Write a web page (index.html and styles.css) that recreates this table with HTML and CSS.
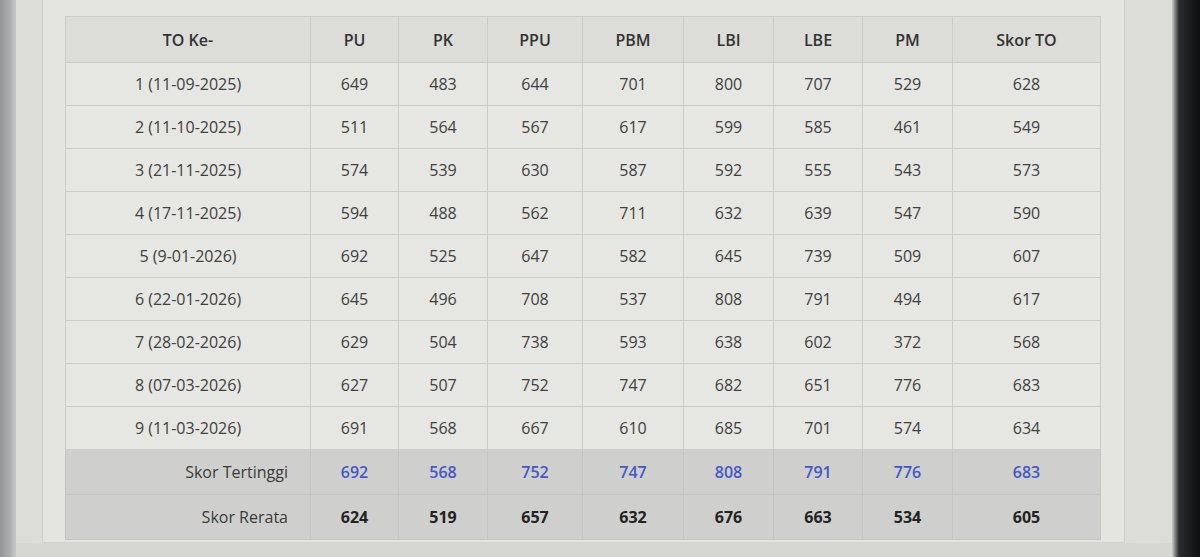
FILE: index.html
```html
<!DOCTYPE html>
<html lang="id">
<head>
<meta charset="utf-8">
<title>Skor TO</title>
<link rel="stylesheet" href="styles.css">
</head>
<body>
<div class="edge-left"></div>
<div class="screen">
  <div class="card">
    <table class="scores">
      <colgroup>
        <col class="c-label"><col class="c88"><col class="c89"><col class="c95"><col class="c101"><col class="c90"><col class="c89"><col class="c90"><col class="c-total">
      </colgroup>
      <thead>
        <tr><th>TO Ke-</th><th>PU</th><th>PK</th><th>PPU</th><th>PBM</th><th>LBI</th><th>LBE</th><th>PM</th><th>Skor TO</th></tr>
      </thead>
      <tbody>
        <tr><td>1 (11-09-2025)</td><td>649</td><td>483</td><td>644</td><td>701</td><td>800</td><td>707</td><td>529</td><td>628</td></tr>
        <tr><td>2 (11-10-2025)</td><td>511</td><td>564</td><td>567</td><td>617</td><td>599</td><td>585</td><td>461</td><td>549</td></tr>
        <tr><td>3 (21-11-2025)</td><td>574</td><td>539</td><td>630</td><td>587</td><td>592</td><td>555</td><td>543</td><td>573</td></tr>
        <tr><td>4 (17-11-2025)</td><td>594</td><td>488</td><td>562</td><td>711</td><td>632</td><td>639</td><td>547</td><td>590</td></tr>
        <tr><td>5 (9-01-2026)</td><td>692</td><td>525</td><td>647</td><td>582</td><td>645</td><td>739</td><td>509</td><td>607</td></tr>
        <tr><td>6 (22-01-2026)</td><td>645</td><td>496</td><td>708</td><td>537</td><td>808</td><td>791</td><td>494</td><td>617</td></tr>
        <tr><td>7 (28-02-2026)</td><td>629</td><td>504</td><td>738</td><td>593</td><td>638</td><td>602</td><td>372</td><td>568</td></tr>
        <tr><td>8 (07-03-2026)</td><td>627</td><td>507</td><td>752</td><td>747</td><td>682</td><td>651</td><td>776</td><td>683</td></tr>
        <tr><td>9 (11-03-2026)</td><td>691</td><td>568</td><td>667</td><td>610</td><td>685</td><td>701</td><td>574</td><td>634</td></tr>
      </tbody>
      <tfoot>
        <tr class="max"><td class="sum-label">Skor Tertinggi</td><td>692</td><td>568</td><td>752</td><td>747</td><td>808</td><td>791</td><td>776</td><td>683</td></tr>
        <tr class="avg"><td class="sum-label">Skor Rerata</td><td>624</td><td>519</td><td>657</td><td>632</td><td>676</td><td>663</td><td>534</td><td>605</td></tr>
      </tfoot>
    </table>
  </div>
  <div class="screen-bottom"></div>
</div>
<div class="edge-right"></div>
</body>
</html>
```

FILE: styles.css
```css
html, body {
  margin: 0;
  padding: 0;
}
body {
  display: flex;
  width: 1200px;
  height: 557px;
  overflow: hidden;
  background: #111214;
  font-family: "Open Sans", "Noto Sans", sans-serif;
}
.edge-left {
  width: 16px;
  background: linear-gradient(90deg, #939496 0%, #acadae 60%, #c6c7c6 100%);
}
.screen {
  width: 1156px;
  display: flex;
  flex-direction: column;
  background: linear-gradient(90deg, #dcdcd9 0%, #e3e3df 30%, #e2e2de 80%, #dcdcd8 100%);
}
.card {
  margin-left: 26px;
  width: 1083px;
  height: 543px;
  box-sizing: border-box;
  border-left: 1px solid #cdcdca;
  border-right: 1px solid #cdcdca;
  border-bottom: 1px solid #d2d2cf;
  padding: 16px 0 0 22px;
  background: #e4e4e0;
}
.screen-bottom {
  flex: 1;
  background: #d6d6d3;
}
.edge-right {
  flex: 1;
  background: linear-gradient(90deg, #c9cac9 0%, #2a2b2d 25%, #0e0f11 100%);
}
.scores {
  width: 1035px;
  table-layout: fixed;
  border-collapse: collapse;
  color: #404040;
  font-size: 16px;
}
.c-label { width: 245px; }
.c88 { width: 88px; }
.c89 { width: 89px; }
.c95 { width: 95px; }
.c101 { width: 101px; }
.c90 { width: 90px; }
.c-total { width: 148px; }
.scores th,
.scores td {
  border: 1px solid #cbcbc7;
  text-align: center;
  padding: 0;
}
.scores th {
  height: 45px;
  background: #dcdcd8;
  font-weight: 600;
  color: #333;
  font-size: 16px;
}
.scores td {
  height: 42px;
  background: #e6e6e2;
}
.scores tfoot td {
  background: #cfd0cd;
  border-color: #c4c5c2;
  height: 44px;
}
.scores .sum-label {
  text-align: right;
  padding-right: 22px;
  font-weight: 400;
  color: #3a3a3a;
}
.max td {
  color: #4357c6;
  font-weight: 600;
}
.avg td {
  color: #232323;
  font-weight: 700;
}
.max .sum-label,
.avg .sum-label {
  color: #3a3a3a;
  font-weight: 400;
}
```
